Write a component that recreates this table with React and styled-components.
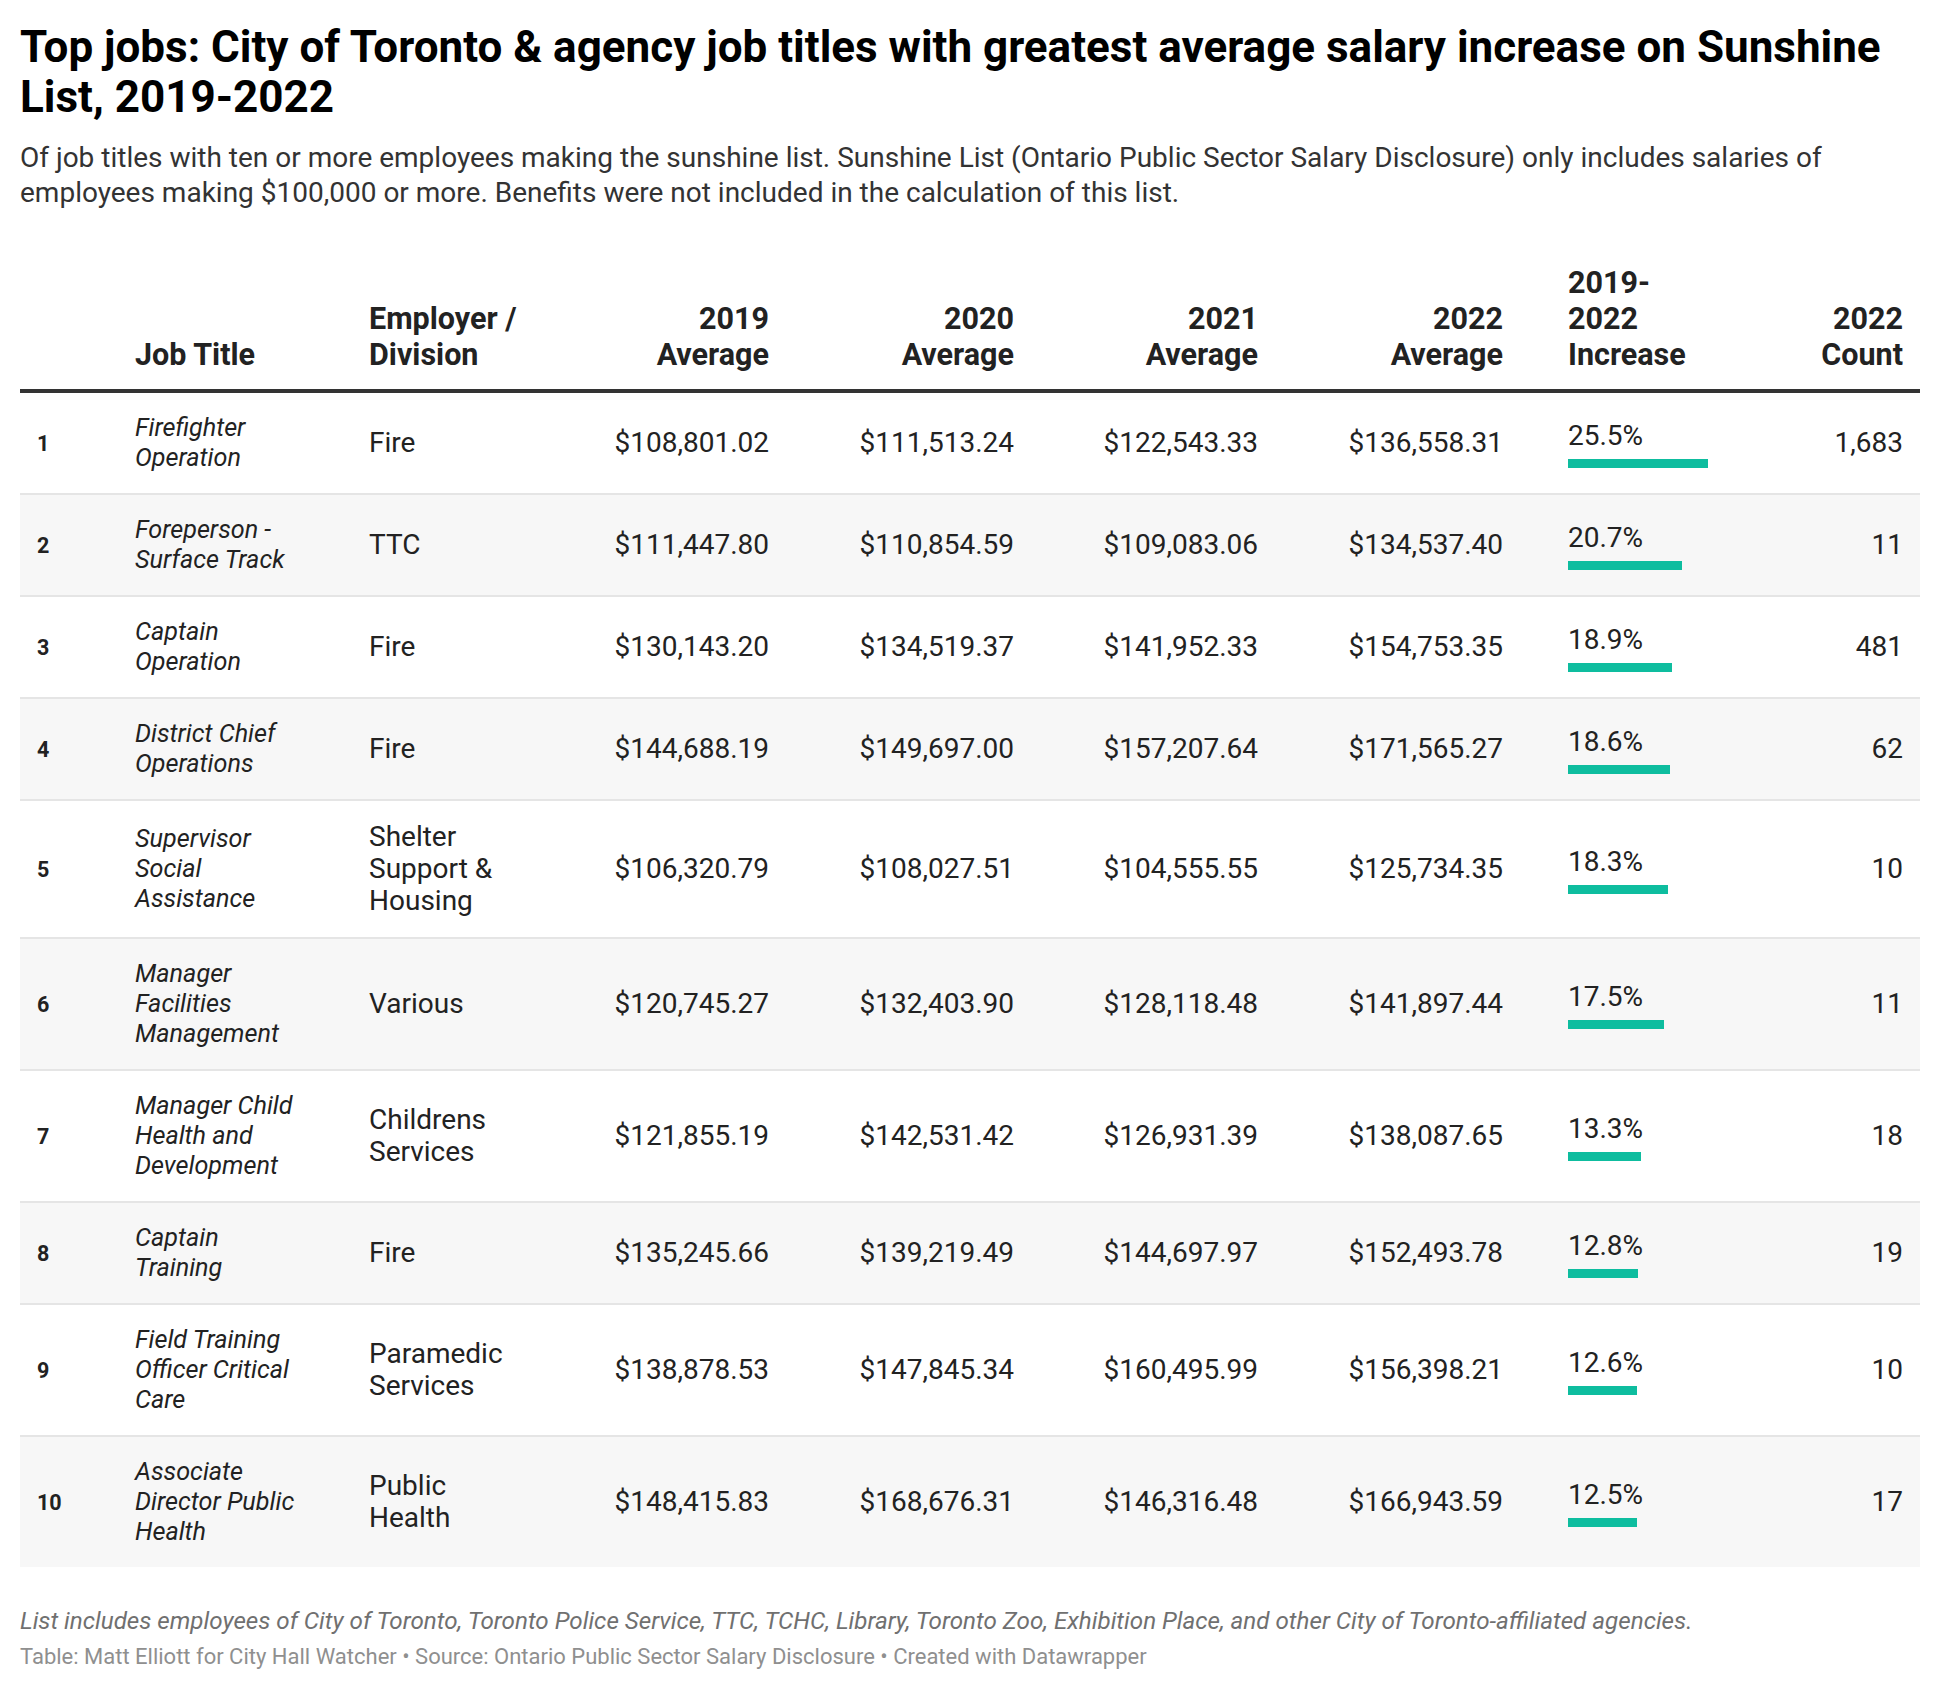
import styled, { createGlobalStyle } from "styled-components"

const GlobalStyle = createGlobalStyle`
  body {
    margin: 0;
    background: #fff;
    font-family: Roboto, "Liberation Sans", sans-serif;
    color: #222;
  }
`

const rows = [
  { n: 1, job: "Firefighter Operation", emp: "Fire", avg: ["$108,801.02", "$111,513.24", "$122,543.33", "$136,558.31"], inc: 25.5, count: "1,683" },
  { n: 2, job: "Foreperson - Surface Track", emp: "TTC", avg: ["$111,447.80", "$110,854.59", "$109,083.06", "$134,537.40"], inc: 20.7, count: "11" },
  { n: 3, job: "Captain Operation", emp: "Fire", avg: ["$130,143.20", "$134,519.37", "$141,952.33", "$154,753.35"], inc: 18.9, count: "481" },
  { n: 4, job: "District Chief Operations", emp: "Fire", avg: ["$144,688.19", "$149,697.00", "$157,207.64", "$171,565.27"], inc: 18.6, count: "62" },
  { n: 5, job: "Supervisor Social Assistance", emp: "Shelter Support & Housing", avg: ["$106,320.79", "$108,027.51", "$104,555.55", "$125,734.35"], inc: 18.3, count: "10" },
  { n: 6, job: "Manager Facilities Management", emp: "Various", avg: ["$120,745.27", "$132,403.90", "$128,118.48", "$141,897.44"], inc: 17.5, count: "11" },
  { n: 7, job: "Manager Child Health and Development", emp: "Childrens Services", avg: ["$121,855.19", "$142,531.42", "$126,931.39", "$138,087.65"], inc: 13.3, count: "18" },
  { n: 8, job: "Captain Training", emp: "Fire", avg: ["$135,245.66", "$139,219.49", "$144,697.97", "$152,493.78"], inc: 12.8, count: "19" },
  { n: 9, job: "Field Training Officer Critical Care", emp: "Paramedic Services", avg: ["$138,878.53", "$147,845.34", "$160,495.99", "$156,398.21"], inc: 12.6, count: "10" },
  { n: 10, job: "Associate Director Public Health", emp: "Public Health", avg: ["$148,415.83", "$168,676.31", "$146,316.48", "$166,943.59"], inc: 12.5, count: "17" },
]

// widths of the columns, left to right
const colWidths = [98, 234, 189, 245, 245, 244, 245, 240, 160]

// 25.5% draws a 140px bar
const maxInc = 25.5
const maxBar = 140

const App = () => {
  return <Page>
    <GlobalStyle />
    <Title>Top jobs: City of Toronto &amp; agency job titles with greatest average salary increase on Sunshine List, 2019-2022</Title>
    <Description>
      Of job titles with ten or more employees making the sunshine list. Sunshine List (Ontario Public Sector Salary Disclosure) only includes salaries of employees making $100,000 or more. Benefits were not included in the calculation of this list.
    </Description>

    <Table>
      <colgroup>
        {colWidths.map((w, i) => <col key={i} style={{ width: w }} />)}
      </colgroup>
      <thead>
        <tr>
          <Th></Th>
          <Th>Job Title</Th>
          <Th $padRight={8}>Employer /<br />Division</Th>
          <Th $align="right">2019<br />Average</Th>
          <Th $align="right">2020<br />Average</Th>
          <Th $align="right">2021<br />Average</Th>
          <Th $align="right">2022<br />Average</Th>
          <Th $padLeft={48}>2019-<br />2022<br />Increase</Th>
          <Th $align="right">2022<br />Count</Th>
        </tr>
      </thead>
      <tbody>
        {rows.map(row => (
          <Row key={row.n}>
            <Td><RankNum>{row.n}</RankNum></Td>
            <Td $padRight={49}><JobTitle>{row.job}</JobTitle></Td>
            <Td $padRight={30}>{row.emp}</Td>
            {row.avg.map((a, i) => <Td key={i} $align="right">{a}</Td>)}
            <Td $padLeft={48}>
              <IncText>{row.inc.toFixed(1)}%</IncText>
              <Bar style={{ width: (row.inc / maxInc) * maxBar }} />
            </Td>
            <Td $align="right">{row.count}</Td>
          </Row>
        ))}
      </tbody>
    </Table>

    <Note>List includes employees of City of Toronto, Toronto Police Service, TTC, TCHC, Library, Toronto Zoo, Exhibition Place, and other City of Toronto-affiliated agencies.</Note>
    <Byline>Table: Matt Elliott for City Hall Watcher • Source: Ontario Public Sector Salary Disclosure • Created with Datawrapper</Byline>
  </Page>
}

const Page = styled.div`
  width: 1900px;
  padding: 22px 20px 20px;
`

const Title = styled.h1`
  margin: 0;
  font-size: 44px;
  line-height: 50px;
  font-weight: 700;
  color: #000;
`

const Description = styled.p`
  margin: 19px 0 0;
  font-size: 28px;
  line-height: 34.5px;
  color: #333;
`

const Table = styled.table`
  margin-top: 38px;
  width: 100%;
  border-collapse: collapse;
  table-layout: fixed;
`

const Th = styled.th`
  vertical-align: bottom;
  text-align: ${p => p.$align || "left"};
  font-size: 30.5px;
  line-height: 36px;
  font-weight: 700;
  color: #222;
  padding: 17px ${p => p.$padRight ?? 17}px 16px ${p => p.$padLeft ?? 17}px;
  border-bottom: 4px solid #333;
`

const Row = styled.tr`
  &:nth-child(even) {
    background: #f7f7f7;
  }
  &:not(:last-child) td {
    border-bottom: 2px solid #e5e5e5;
  }
`

const Td = styled.td`
  vertical-align: middle;
  text-align: ${p => p.$align || "left"};
  font-size: 28px;
  line-height: 32px;
  color: #222;
  padding: 20px ${p => p.$padRight ?? 17}px 20px ${p => p.$padLeft ?? 17}px;
`

const RankNum = styled.span`
  font-size: 21.5px;
  font-weight: 700;
`

const JobTitle = styled.span`
  display: block;
  font-style: italic;
  font-size: 25.2px;
  line-height: 30px;
`

const IncText = styled.div`
  line-height: normal;
`

const Bar = styled.div`
  height: 9px;
  margin-top: 7px;
  background: #0ebd9f;
`

const Note = styled.p`
  margin: 39px 0 0;
  font-style: italic;
  font-size: 24.2px;
  line-height: 30px;
  color: #707070;
`

const Byline = styled.p`
  margin: 7px 0 0;
  font-size: 22px;
  line-height: 28px;
  color: #8f8f8f;
`

export default App
